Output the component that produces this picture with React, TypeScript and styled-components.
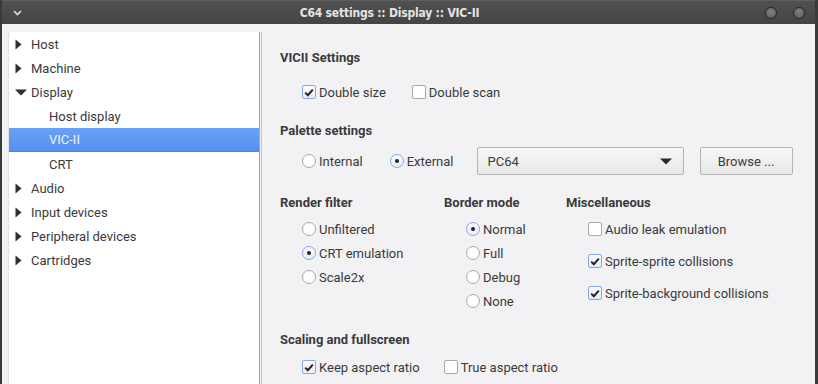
import { FC } from "react";
import styled, { createGlobalStyle } from "styled-components";

const GlobalStyle = createGlobalStyle`
  html, body {
    margin: 0;
    padding: 0;
    background: #f2f2f4;
  }
  body {
    font-family: Roboto, "Noto Sans", "Liberation Sans", sans-serif;
    font-size: 13px;
    color: #3a3a3a;
  }
`;

type TreeItem = {
  label: string;
  level: 0 | 1;
  arrow?: "right" | "down";
  selected?: boolean;
};

const treeItems: TreeItem[] = [
  { label: "Host", level: 0, arrow: "right" },
  { label: "Machine", level: 0, arrow: "right" },
  { label: "Display", level: 0, arrow: "down" },
  { label: "Host display", level: 1 },
  { label: "VIC-II", level: 1, selected: true },
  { label: "CRT", level: 1 },
  { label: "Audio", level: 0, arrow: "right" },
  { label: "Input devices", level: 0, arrow: "right" },
  { label: "Peripheral devices", level: 0, arrow: "right" },
  { label: "Cartridges", level: 0, arrow: "right" },
];

const Check: FC<{ checked?: boolean; label: string }> = ({ checked, label }) => (
  <Option>
    <CheckBox checked={checked}>
      {checked && (
        <svg width="10" height="9" viewBox="0 0 10 9">
          <path d="M1.2 4.6 L3.8 7.2 L8.8 1.6" fill="none" stroke="#222" strokeWidth="2" />
        </svg>
      )}
    </CheckBox>
    {label}
  </Option>
);

const Radio: FC<{ checked?: boolean; label: string }> = ({ checked, label }) => (
  <Option>
    <RadioCircle checked={checked}>{checked && <Dot />}</RadioCircle>
    {label}
  </Option>
);

const App: FC = () => {
  return (
    <Window>
      <GlobalStyle />
      <TitleBar>
        <Chevron>
          <svg width="9" height="6" viewBox="0 0 9 6">
            <path d="M1 1 L4.5 4.5 L8 1" fill="none" stroke="#e0e0e0" strokeWidth="1.6" />
          </svg>
        </Chevron>
        <Title>C64 settings :: Display :: VIC-II</Title>
        <WinButtons>
          <WinButton />
          <WinButton />
        </WinButtons>
      </TitleBar>
      <Body>
        <Tree>
          {treeItems.map((item) => (
            <TreeRow key={item.label} selected={item.selected} level={item.level}>
              {item.arrow && (
                <Arrow>
                  {item.arrow === "right" ? (
                    <svg width="7" height="11" viewBox="0 0 7 11">
                      <path d="M0.5 0.5 L6.5 5.5 L0.5 10.5 Z" fill="#2e2e2e" />
                    </svg>
                  ) : (
                    <svg width="12" height="7" viewBox="0 0 12 7">
                      <path d="M0 0.5 L12 0.5 L6 6.5 Z" fill="#2e2e2e" />
                    </svg>
                  )}
                </Arrow>
              )}
              {item.label}
            </TreeRow>
          ))}
        </Tree>
        <Splitter />
        <Content>
          <Heading>VICII Settings</Heading>
          <OptionRow top={14} gap={26}>
            <Check checked label="Double size" />
            <Check label="Double scan" />
          </OptionRow>

          <Heading top={19}>Palette settings</Heading>
          <PaletteRow>
            <Radio label="Internal" />
            <Radio checked label="External" />
            <Combo>
              PC64
              <svg width="12" height="7" viewBox="0 0 12 7">
                <path d="M0 0.5 L12 0.5 L6 6.5 Z" fill="#2a2a2a" />
              </svg>
            </Combo>
            <Button>Browse ...</Button>
          </PaletteRow>

          <Columns>
            <Column width={164}>
              <Heading>Render filter</Heading>
              <OptionList>
                <Radio label="Unfiltered" />
                <Radio checked label="CRT emulation" />
                <Radio label="Scale2x" />
              </OptionList>
            </Column>
            <Column width={122}>
              <Heading>Border mode</Heading>
              <OptionList>
                <Radio checked label="Normal" />
                <Radio label="Full" />
                <Radio label="Debug" />
                <Radio label="None" />
              </OptionList>
            </Column>
            <Column>
              <Heading>Miscellaneous</Heading>
              <OptionList spacing={32} indent={22}>
                <Check label="Audio leak emulation" />
                <Check checked label="Sprite-sprite collisions" />
                <Check checked label="Sprite-background collisions" />
              </OptionList>
            </Column>
          </Columns>

          <Heading top={19}>Scaling and fullscreen</Heading>
          <OptionRow top={7} gap={24}>
            <Check checked label="Keep aspect ratio" />
            <Check label="True aspect ratio" />
          </OptionRow>
        </Content>
      </Body>
    </Window>
  );
};

export default App;

const Window = styled.div`
  width: 818px;
  height: 384px;
  display: flex;
  flex-direction: column;
  box-sizing: border-box;
  border-left: 2px solid #3a3a3a;
  border-right: 3px solid #3a3a3a;
  overflow: hidden;
  background: #f2f2f4;
`;

const TitleBar = styled.div`
  height: 24px;
  flex: none;
  display: flex;
  align-items: center;
  background: linear-gradient(#505050, #444444);
  border-top: 1px solid #5e5e5e;
  box-sizing: border-box;
`;

const Chevron = styled.div`
  width: 30px;
  display: flex;
  justify-content: center;
  padding-top: 1px;
`;

const Title = styled.div`
  flex: 1;
  text-align: center;
  color: #e4e4e4;
  font-family: "DejaVu Sans Condensed", "DejaVu Sans", sans-serif;
  font-stretch: condensed;
  font-weight: bold;
  font-size: 12px;
  letter-spacing: -0.2px;
  padding-right: 18px;
`;

const WinButtons = styled.div`
  display: flex;
  gap: 16px;
  padding-right: 10px;
`;

const WinButton = styled.div`
  width: 12px;
  height: 12px;
  border-radius: 50%;
  border: 1px solid #262626;
  background: radial-gradient(circle at 50% 35%, #808080, #595959);
  box-sizing: border-box;
`;

const Body = styled.div`
  flex: 1;
  display: flex;
  padding: 8px 0 0 6px;
  min-height: 0;
`;

const Tree = styled.div`
  width: 252px;
  flex: none;
  box-sizing: border-box;
  background: #ffffff;
  border-right: 1px solid #a8a8a8;
  border-left: 1px solid #e2e2e4;
  display: flex;
  flex-direction: column;
`;

const TreeRow = styled.div<{ selected?: boolean; level: number }>`
  height: 24px;
  display: flex;
  align-items: center;
  padding-left: ${(p) => (p.level === 1 ? 40 : 6)}px;
  color: ${(p) => (p.selected ? "#eef3fd" : "#3a3a3a")};
  background: ${(p) =>
    p.selected ? "linear-gradient(#6aa0f6, #5590f0)" : "transparent"};
  border-bottom: ${(p) => (p.selected ? "1px solid #4b82e0" : "none")};
  box-sizing: border-box;
`;

const Arrow = styled.div`
  width: 16px;
  display: flex;
  align-items: center;
  svg {
    display: block;
  }
`;

const Splitter = styled.div`
  width: 2px;
  margin-left: 1px;
  border-left: 1px solid #c4c4c6;
  flex: none;
`;

const Content = styled.div`
  flex: 1;
  padding: 18px 0 0 16px;
`;

const Heading = styled.div<{ top?: number }>`
  font-weight: bold;
  line-height: 16px;
  height: 16px;
  color: #3a3a3a;
  margin-top: ${(p) => p.top ?? 0}px;
`;

const OptionRow = styled.div<{ top: number; gap: number }>`
  display: flex;
  align-items: center;
  height: 24px;
  margin-top: ${(p) => p.top}px;
  padding-left: 22px;
  gap: ${(p) => p.gap}px;
`;

const PaletteRow = styled.div`
  display: flex;
  align-items: center;
  height: 28px;
  margin-top: 8px;
  padding-left: 22px;
  gap: 27px;
`;

const Option = styled.label`
  display: flex;
  align-items: center;
  height: 24px;
  gap: 3px;
  white-space: nowrap;
  color: #3a3a3a;
`;

const CheckBox = styled.span<{ checked?: boolean }>`
  width: 14px;
  height: 14px;
  box-sizing: border-box;
  border-radius: 2px;
  border: 1px solid ${(p) => (p.checked ? "#86a8ea" : "#a9a9ab")};
  background: ${(p) => (p.checked ? "linear-gradient(#fafbff, #e9eef8)" : "#ffffff")};
  display: flex;
  align-items: center;
  justify-content: center;
`;

const RadioCircle = styled.span<{ checked?: boolean }>`
  width: 14px;
  height: 14px;
  box-sizing: border-box;
  border-radius: 50%;
  border: 1px solid ${(p) => (p.checked ? "#86a8ea" : "#a9a9ab")};
  background: ${(p) => (p.checked ? "linear-gradient(#fafbff, #e9eef8)" : "#ffffff")};
  display: flex;
  align-items: center;
  justify-content: center;
`;

const Dot = styled.span`
  width: 4px;
  height: 4px;
  border-radius: 50%;
  background: #222;
`;

const Combo = styled.div`
  width: 207px;
  height: 28px;
  box-sizing: border-box;
  margin-left: -4px;
  border: 1px solid #b4b4b6;
  border-radius: 2px;
  background: linear-gradient(#f6f6f6, #e8e8e8);
  display: flex;
  align-items: center;
  justify-content: space-between;
  padding: 0 11px 0 10px;
  color: #3a3a3a;
`;

const Button = styled.div`
  width: 93px;
  height: 28px;
  box-sizing: border-box;
  margin-left: -11px;
  border: 1px solid #b4b4b6;
  border-radius: 2px;
  background: linear-gradient(#f6f6f6, #e8e8e8);
  display: flex;
  align-items: center;
  justify-content: center;
  color: #3a3a3a;
`;

const Columns = styled.div`
  display: flex;
  margin-top: 20px;
`;

const Column = styled.div<{ width?: number }>`
  width: ${(p) => (p.width ? `${p.width}px` : "auto")};
  flex: ${(p) => (p.width ? "none" : "1")};
`;

const OptionList = styled.div<{ spacing?: number; indent?: number }>`
  display: flex;
  flex-direction: column;
  margin-top: 6px;
  padding-left: ${(p) => p.indent ?? 22}px;
  gap: ${(p) => (p.spacing ?? 24) - 24}px;
`;
